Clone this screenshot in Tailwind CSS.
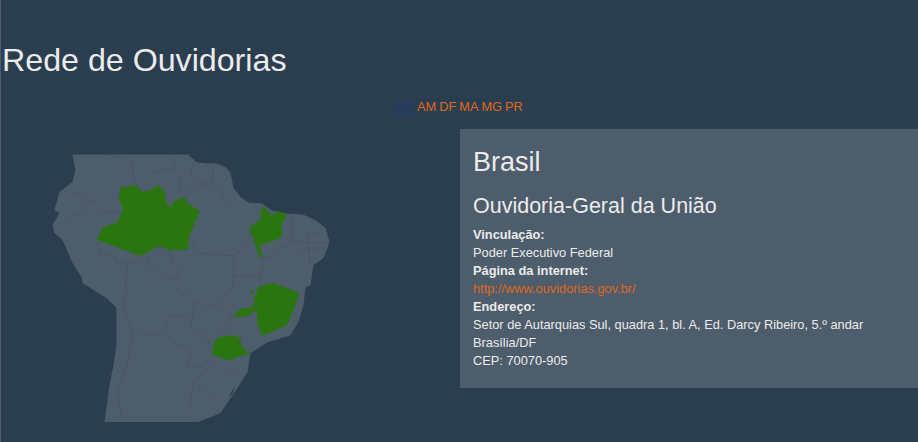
<!DOCTYPE html>
<html lang="en">
<head>
    <meta charset="UTF-8">
    <title>Rede de Ouvidorias</title>
    <script src="https://cdn.jsdelivr.net/npm/@tailwindcss/browser@4"></script>
</head>
<body class="h-[442px] overflow-hidden border-l border-[#4e5d6c] bg-[#2b3e50] text-[#ebebeb] font-['Liberation_Sans',Arial,sans-serif] text-[12.8px] leading-[18px]">
    <h1 class="pl-[1px] pt-[42px] text-[32.2px] leading-[36px] font-normal">Rede de Ouvidorias</h1>

    <nav class="mt-[20px] flex justify-center gap-[3px] text-[12.8px] leading-[18px]">
        <a href="#" class="text-[#1c3a78] underline">BR</a>
        <a href="#" class="text-[#df691a]">AM</a>
        <a href="#" class="text-[#df691a]">DF</a>
        <a href="#" class="text-[#df691a]">MA</a>
        <a href="#" class="text-[#df691a]">MG</a>
        <a href="#" class="text-[#df691a]">PR</a>
    </nav>

    <main class="mt-[13px] flex">
        <div class="w-[459px] shrink-0">
            <svg width="459" height="293" viewBox="1 129 459 293" class="block">
                <!-- continente -->
                <path fill="#4e5d6c" stroke="#4e5d6c" stroke-linejoin="round" d="M73 155H188L197 163L208 164L217 164L226 168L230 173L233 188L240 197L248 203L262 204L272 211L287 214L303 215L316 221L325 228L329 242L323 258L313 265L310 285L305 287L303 305L298 322L290 335L267 342L250 353L247 372L237 388L220 413L207 418L197 422H105L110 385L114 365L117 345L117 308L107 298L83 283L82 277L73 263L63 240L55 233L53 225L60 213L55 210L60 192L73 182L76 170Z"/>
                <!-- divisas -->
                <g fill="none" stroke="#465463" stroke-width="0.8">
                    <path d="M107 155L120 157L133 163L133 178L138 187M152 173L173 168L177 155M173 168L180 178L180 188"/>
                    <path d="M195 163L190 175L203 183M213 165L213 183M230 175L220 187"/>
                    <path d="M187 192L200 185L210 183L220 190L227 205L237 197"/>
                    <path d="M67 191L87 198L89 202L83 212L72 217L65 227L58 222M87 198L95 203L102 212L118 212"/>
                    <path d="M97 242L100 253L117 257L117 263L137 262L148 255L148 268L175 280L180 268L171 262L170 250"/>
                    <path d="M190 238L198 253L235 256L250 238L250 228M235 257L233 285M233 275L260 277M263 258L260 285"/>
                    <path d="M263 258L273 258L280 248L293 242L292 215M293 242L307 242L328 243M293 253L310 248L328 248M310 265L308 235L323 233"/>
                    <path d="M128 263L125 280L127 295L122 305L128 322L133 337L140 332L153 335L160 332L165 332L167 318L173 315L190 317L192 330L202 333L210 344"/>
                    <path d="M177 285L178 293L188 295L195 302L192 318M195 302L217 307L233 315L217 335M220 303L233 285"/>
                    <path d="M133 337L130 348L128 362L118 392L122 418"/>
                    <path d="M165 332L173 342L193 353L187 365L200 367L212 357"/>
                    <path d="M215 363L202 373L193 385L188 412M197 385L220 402M220 365L242 375"/>
                </g>
                <path fill="#2b3e50" d="M231 392L235 387L233 393L229 398Z"/>
                <!-- estados em destaque -->
                <g fill="#2b7510">
                    <path d="M120 188L136 185L143 192L151 190L158 185L165 192L166 202L170 207L175 200L185 197L187 203L200 211L189 237L188 250L168 250L160 246L140 256L97 240L102 228L118 222L123 208L119 200Z"/>
                    <path d="M262 205L272 216L277 211L287 214L282 225L282 237L270 242L260 245L263 258L260 258L257 250L253 238L249 228L260 220Z"/>
                    <path d="M258 287L273 283L287 288L299 293L295 307L287 325L277 330L262 336L257 322L257 310L245 317L233 317L240 309L253 307L255 297ZM250 290h3v3h-3Z"/>
                    <path d="M217 338L230 335L240 338L242 347L250 353L230 360L220 358L212 354L213 345Z"/>
                </g>
            </svg>
        </div>

        <section class="w-[458px] h-[259px] bg-[#4e5d6c] px-[13px] pt-[17px]">
            <h2 class="text-[27px] leading-[32px] font-normal">Brasil</h2>
            <h3 class="mt-[17px] text-[21.5px] leading-[22px] font-normal">Ouvidoria-Geral da União</h3>
            <div class="mt-[9px]">
                <p class="font-bold">Vinculação:</p>
                <p>Poder Executivo Federal</p>
                <p class="font-bold">Página da internet:</p>
                <p><a href="#" class="text-[#df691a]">http://www.ouvidorias.gov.br/</a></p>
                <p class="font-bold">Endereço:</p>
                <p>Setor de Autarquias Sul, quadra 1, bl. A, Ed. Darcy Ribeiro, 5.º andar</p>
                <p>Brasília/DF</p>
                <p>CEP: 70070-905</p>
            </div>
        </section>
    </main>
</body>
</html>
